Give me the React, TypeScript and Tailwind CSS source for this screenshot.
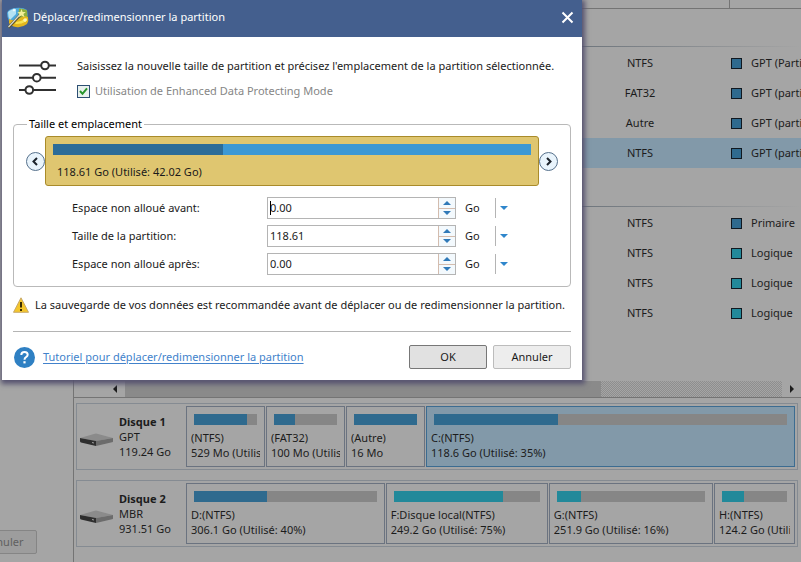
import { useState } from "react";

const PARTITIONS = [
  { fs: "NTFS", type: "GPT (Partition", color: "bg-[#2f6a8e]" },
  { fs: "FAT32", type: "GPT (partition", color: "bg-[#2f6a8e]" },
  { fs: "Autre", type: "GPT (partition", color: "bg-[#2f6a8e]" },
  { fs: "NTFS", type: "GPT (partition", color: "bg-[#2f6a8e]", selected: true },
];

const PARTITIONS_2 = [
  { fs: "NTFS", type: "Primaire", color: "bg-[#2f6a8e]" },
  { fs: "NTFS", type: "Logique", color: "bg-[#22899a]" },
  { fs: "NTFS", type: "Logique", color: "bg-[#22899a]" },
  { fs: "NTFS", type: "Logique", color: "bg-[#22899a]" },
];

const DISK_1 = [
  { name: "(NTFS)", info: "529 Mo (Utilisé", used: 84, color: "bg-[#2f6a8e]", size: "w-[79px]" },
  { name: "(FAT32)", info: "100 Mo (Utilisé", used: 33, color: "bg-[#2f6a8e]", size: "w-[79px]" },
  { name: "(Autre)", info: "16 Mo", used: 100, color: "bg-[#2f6a8e]", size: "w-[79px]" },
  { name: "C:(NTFS)", info: "118.6 Go (Utilisé: 35%)", used: 35, color: "bg-[#2f6a8e]", size: "flex-1", selected: true },
];

const DISK_2 = [
  { name: "D:(NTFS)", info: "306.1 Go (Utilisé: 40%)", used: 40, color: "bg-[#2f6a8e]", size: "flex-[199]" },
  { name: "F:Disque local(NTFS)", info: "249.2 Go (Utilisé: 75%)", used: 75, color: "bg-[#22899a]", size: "flex-[162]" },
  { name: "G:(NTFS)", info: "251.9 Go (Utilisé: 16%)", used: 16, color: "bg-[#22899a]", size: "flex-[164]" },
  { name: "H:(NTFS)", info: "124.2 Go (Utilisé", used: 34, color: "bg-[#22899a]", size: "flex-[80]" },
];

type Partition = { fs: string; type: string; color: string; selected?: boolean };
type Volume = { name: string; info: string; used: number; color: string; size: string; selected?: boolean };

function PartitionRows({ rows }: { rows: Partition[] }) {
  return (
    <>
      {rows.map((row, i) => (
        <tr key={i} className={row.selected ? "h-[30px] bg-[#8299a9]" : "h-[30px]"}>
          <td></td>
          <td className="text-center">{row.fs}</td>
          <td>
            <div className="flex items-center gap-2.5 overflow-hidden pl-[3px] whitespace-nowrap">
              <span className={`size-[9px] shrink-0 outline outline-[#101820] ${row.color}`}></span>
              {row.type}
            </div>
          </td>
        </tr>
      ))}
    </>
  );
}

function GroupRow() {
  return (
    <tr className="h-10">
      <td colSpan={3} className="pb-px align-bottom">
        <div className="h-px bg-linear-to-r from-[#6f767d] from-70% to-[#a5a5a5]"></div>
      </td>
    </tr>
  );
}

function DriveIcon() {
  return (
    <svg width="33" height="14" viewBox="0 0 33 14" className="mt-1.5 shrink-0">
      <path d="M0 5 L14 1 Q16 0 18 1 L33 5 L16 8 Z" fill="#8b8b8b" />
      <path d="M0 5 L16 8 V13 L1 9.500 Q0 9 0 8 Z" fill="#2e2e2e" />
      <path d="M16 8 L33 5 V8.500 Q33 9 32 9.300 L16 13 Z" fill="#6c6c6c" />
      <path d="M12 9.500 L14 10" stroke="#a0a0a0" />
    </svg>
  );
}

function Disk({ name, scheme, size, volumes }: { name: string; scheme: string; size: string; volumes: Volume[] }) {
  return (
    <section className="flex h-[67px] border border-[#858b92] p-0.5">
      <div className="flex w-[107px] shrink-0 items-center gap-1.5 pl-px">
        <DriveIcon />
        <div className="leading-[15px] whitespace-nowrap">
          <h2 className="font-bold">{name}</h2>
          <p>{scheme}</p>
          <p>{size}</p>
        </div>
      </div>
      <div className="flex min-w-0 flex-1 gap-px">
        {volumes.map((v) => (
          <div
            key={v.name}
            className={`min-w-0 border pt-[7px] ${v.size} ${v.selected ? "border-[#3c6c91] bg-[#8299a9]" : "border-[#6b7380]"}`}
          >
            <div className="mx-[7px] h-[11px] bg-[#868686]">
              <div className={`h-full ${v.color}`} style={{ width: `${v.used}%` }}></div>
            </div>
            <div className="mr-1 ml-1 overflow-hidden pt-[5px] leading-[15px] whitespace-nowrap">
              <p>{v.name}</p>
              <p>{v.info}</p>
            </div>
          </div>
        ))}
      </div>
    </section>
  );
}

function MainWindow() {
  return (
    <div className="flex h-screen text-[#1c1c1c]">
      <aside className="flex w-[73px] shrink-0 items-end overflow-hidden pb-2">
        <button className="-ml-[41px] h-6 w-[78px] shrink-0 rounded-xs border border-[#858585] bg-[#9d9d9d] pl-2.5 text-[#606060]">
          Annuler
        </button>
      </aside>
      <main className="flex min-w-0 flex-1 flex-col border-l border-[#747474]">
        <table className="w-full table-fixed border-collapse">
          <colgroup>
            <col />
            <col className="w-[178px]" />
            <col className="w-[72px]" />
          </colgroup>
          <tbody>
            <tr className="h-2 border-b border-[#747474]">
              <td></td>
              <td></td>
              <td className="border-l border-[#747474]"></td>
            </tr>
            <GroupRow />
            <PartitionRows rows={PARTITIONS} />
            <GroupRow />
            <PartitionRows rows={PARTITIONS_2} />
          </tbody>
        </table>
        <div className="mt-auto flex h-[17px] shrink-0 border-b border-[#747474]">
          <button aria-label="Défiler à gauche" className="flex w-[51px] items-center justify-end pr-2">
            <span className="border-y-4 border-r-4 border-y-transparent border-r-[#1c1c1c]"></span>
          </button>
          <div className="flex-[476] bg-[#8a8a8a]"></div>
          <div className="flex-[181] bg-[conic-gradient(#8e8e8e_25%,#a5a5a5_0_50%,#8e8e8e_0_75%,#a5a5a5_0)] bg-size-[2px_2px]"></div>
          <button aria-label="Défiler à droite" className="flex w-[19px] items-center justify-center">
            <span className="border-y-4 border-l-4 border-y-transparent border-l-[#1c1c1c]"></span>
          </button>
        </div>
        <div className="flex flex-col gap-2.5 pt-[5px] pr-[3px] pb-[15px] pl-0.5">
          <Disk name="Disque 1" scheme="GPT" size="119.24 Go" volumes={DISK_1} />
          <Disk name="Disque 2" scheme="MBR" size="931.51 Go" volumes={DISK_2} />
        </div>
      </main>
    </div>
  );
}

function WizardIcon() {
  return (
    <svg width="22" height="22" viewBox="0 0 22 22" className="shrink-0">
      <path d="M0 6 Q1 2 8 1 Q16 0 20 3 Q21 8 20 11 L2 14 Q0 10 0 6 Z" fill="#4fa9dc" />
      <path d="M1 5 Q4 2 9 2 L9 7 L3 13 Q1 10 1 5 Z" fill="#b5e2f3" />
      <path d="M12 1.500 Q18 2 20 3.500 L20.500 11 L11 12 Z" fill="#8fae3c" />
      <path d="M2 12 Q8 15 13 11 Q17 8 21 10 Q22 14 20 17 Q15 21 9 20 Q4 19 2 16 Z" fill="#e3b61d" />
      <path d="M9 15 Q14 14.500 20 11 Q20.500 13 19 14.500 Q14 17.500 8 17 Z" fill="#f8e24e" />
      <path d="M1.500 20.500 L14 7" stroke="#57512f" strokeWidth="2.600" />
      <path d="M1.500 20 L14 6.500" stroke="#d8dccf" strokeWidth="1.200" />
      <path d="M14.500 2 L15.600 5 L18.800 5 L16.400 7 L17.500 10.200 L14.500 8.400 L11.700 10 L12.600 7 L10.200 5.200 L13.400 5 Z" fill="#f3ef9a" />
      <path d="M7 1 L7.600 2.600 L9 3 L7.600 3.600 L7 5 L6.400 3.600 L5 3 L6.400 2.600 Z" fill="#fff" />
      <path d="M18 11 V15 M16 13 H20" stroke="#fffbd0" />
    </svg>
  );
}

function SlidersIcon() {
  return (
    <svg width="38" height="36" viewBox="0 0 38 36" fill="none" stroke="#303030" strokeWidth="2" className="shrink-0">
      <path d="M0 5.500 H22 M30 5.500 H37 M0 17.700 H14 M22 17.700 H37 M0 30 H6 M14 30 H37" />
      <circle cx="26" cy="5.500" r="3.800" />
      <circle cx="17.800" cy="17.700" r="3.800" />
      <circle cx="10.300" cy="30" r="3.800" />
    </svg>
  );
}

function MoveButton({ label, path }: { label: string; path: string }) {
  return (
    <button aria-label={label} className="flex size-[19px] shrink-0 items-center justify-center rounded-full border border-[#56718c] bg-[#e9f4fc]">
      <svg width="9" height="9" viewBox="0 0 9 9" fill="none" stroke="#1d232b" strokeWidth="2">
        <path d={path} />
      </svg>
    </button>
  );
}

function SizeField({ id, label, initial, caret }: { id: string; label: string; initial: string; caret?: boolean }) {
  const [value, setValue] = useState(initial);
  const step = (d: number) => setValue(Math.max(0, Number(value) + d).toFixed(2));
  return (
    <div className="flex h-[22px] items-center">
      <label htmlFor={id} className="w-[195px] shrink-0">
        {label}
      </label>
      <div className="relative flex h-full flex-1 border border-[#b4b4b4]">
        <input
          id={id}
          value={value}
          onChange={(e) => setValue(e.target.value)}
          className="w-0 min-w-0 flex-1 pl-0.5 outline-none"
        />
        {caret && <span className="absolute top-[3px] left-[2px] h-[14px] w-px bg-black"></span>}
        <div className="flex w-[17px] flex-col divide-y divide-[#d3bcae] border-l border-[#d3bcae] bg-[#f3f9fd]">
          <button aria-label={`${label} +`} onClick={() => step(1)} className="flex flex-1 items-center justify-center">
            <span className="border-x-4 border-b-4 border-x-transparent border-b-[#2f79b8]"></span>
          </button>
          <button aria-label={`${label} -`} onClick={() => step(-1)} className="flex flex-1 items-center justify-center">
            <span className="border-x-4 border-t-4 border-x-transparent border-t-[#2f79b8]"></span>
          </button>
        </div>
      </div>
      <div className="relative ml-[9px] flex h-5 w-[46px] items-center">
        <select aria-label={`${label} unité`} className="h-full w-full appearance-none outline-none">
          <option>Go</option>
          <option>Mo</option>
        </select>
        <span className="pointer-events-none absolute inset-y-0 right-0 flex w-4 items-center justify-end border-l border-[#b4b4b4] pr-[3px]">
          <span className="border-x-4 border-t-4 border-x-transparent border-t-[#2f86cc]"></span>
        </span>
      </div>
    </div>
  );
}

function ResizeDialog() {
  return (
    <div
      role="dialog"
      aria-labelledby="dialog-title"
      className="absolute top-0 left-0.5 w-[580px] bg-white text-[#1a1a1a] shadow-[1px_2px_5px_2px_#55526f]"
    >
      <header className="flex h-[37px] items-center gap-1 bg-[#445f8e] pr-2 pb-0.5 pl-[5px] text-white">
        <WizardIcon />
        <h1 id="dialog-title" className="flex-1">
          Déplacer/redimensionner la partition
        </h1>
        <button aria-label="Fermer" className="flex h-5 w-[13px] items-center justify-center">
          <svg width="13" height="13" viewBox="0 0 13 13" stroke="#fff" strokeWidth="2">
            <path d="M1.500 1.500 L11.500 11.500 M11.500 1.500 L1.500 11.500" />
          </svg>
        </button>
      </header>

      <div className="px-[11px] pt-5 pb-[11px]">
        <div className="flex gap-5 pl-1.5">
          <div className="pt-[3px]">
            <SlidersIcon />
          </div>
          <div className="whitespace-nowrap">
            <p className="leading-[18px]">
              Saisissez la nouvelle taille de partition et précisez l'emplacement de la partition sélectionnée.
            </p>
            <label className="mt-[7px] flex items-center gap-[5px] leading-[18px] text-[#868686]">
              <span className="relative flex size-[13px]">
                <input
                  type="checkbox"
                  defaultChecked
                  disabled
                  className="size-[13px] appearance-none border border-[#2d4f73] bg-[#e9f1ee]"
                />
                <svg width="13" height="13" viewBox="0 0 13 13" className="absolute inset-0" fill="none" stroke="#27952c" strokeWidth="2">
                  <path d="M3 6 L5.500 8.800 L10 3.300" />
                </svg>
              </span>
              Utilisation de Enhanced Data Protecting Mode
            </label>
          </div>
        </div>

        <fieldset className="mt-4 h-[171px] min-w-0 rounded-[4px] border border-[#b9b9b9]">
          <legend className="ml-[13px] px-0.5 leading-4 text-black">Taille et emplacement</legend>
          <div className="mt-1 flex items-center px-3">
            <MoveButton label="Déplacer à gauche" path="M6 1 L2.500 4.500 L6 8" />
            <div className="h-[50px] min-w-0 flex-1 rounded-[3px] border border-[#a98b2a] bg-[#dfc670] px-[7px] pt-[7px]">
              <div className="h-[11px] bg-[#3c98d4]">
                <div className="h-full bg-[#2c6c98]" style={{ width: "35.5%" }}></div>
              </div>
              <p className="pt-2 pl-1 leading-[18px]">118.61 Go (Utilisé: 42.02 Go)</p>
            </div>
            <MoveButton label="Déplacer à droite" path="M3 1 L6.500 4.500 L3 8" />
          </div>
          <div className="mt-[11px] flex flex-col gap-1.5 pr-[59px] pl-[58px]">
            <SizeField id="before" label="Espace non alloué avant:" initial="0.00" caret />
            <SizeField id="size" label="Taille de la partition:" initial="118.61" />
            <SizeField id="after" label="Espace non alloué après:" initial="0.00" />
          </div>
        </fieldset>

        <div className="flex h-[45px] items-center gap-1.5 border-b border-[#b4b4b4] pb-2 whitespace-nowrap">
          <svg width="16" height="16" viewBox="0 0 16 16" className="shrink-0">
            <path d="M8 .8 L15.500 15.300 H.5 Z" fill="#f4c62c" stroke="#c7a96a" strokeLinejoin="round" />
            <path d="M8 5 V10.500 M8 12 V14" stroke="#3a2c00" strokeWidth="2" />
          </svg>
          <p>La sauvegarde de vos données est recommandée avant de déplacer ou de redimensionner la partition.</p>
        </div>

        <footer className="mt-[13px] flex h-6 items-center gap-1.5">
          <div className="flex flex-1 items-center gap-2 pl-px">
            <svg width="21" height="21" viewBox="0 0 21 21" fill="none">
              <circle cx="10.500" cy="10.500" r="10.500" fill="#2f80c3" />
              <path d="M7.300 8 Q7.300 5 10.500 5 Q13.700 5 13.700 7.800 Q13.700 9.200 12 10.200 Q10.500 11 10.500 12.700" stroke="#fff" strokeWidth="2" />
              <path d="M10.500 14.200 V16.400" stroke="#fff" strokeWidth="2.200" />
            </svg>
            <a href="#tutoriel" className="text-[#4282cb] underline underline-offset-2">
              Tutoriel pour déplacer/redimensionner la partition
            </a>
          </div>
          <button className="h-6 w-[78px] rounded-xs border border-[#777] bg-[#e1e1e1]">OK</button>
          <button className="h-6 w-[78px] rounded-xs border border-[#bcbcbc] bg-[#ededed]">Annuler</button>
        </footer>
      </div>
    </div>
  );
}

export default function App() {
  return (
    <div className="relative min-h-screen overflow-hidden bg-[#a5a5a5] font-['Noto_Sans','Open_Sans',sans-serif] text-[11px]">
      <MainWindow />
      <ResizeDialog />
    </div>
  );
}
